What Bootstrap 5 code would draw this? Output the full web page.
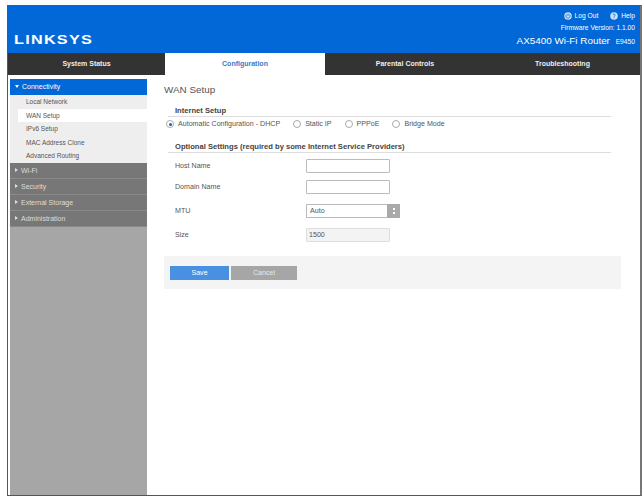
<!DOCTYPE html>
<html lang="en">
<head>
<meta charset="UTF-8">
<title>Linksys WAN Setup</title>
<link href="https://cdn.jsdelivr.net/npm/bootstrap@5.3.3/dist/css/bootstrap.min.css" rel="stylesheet">
<style>
  html, body { height: 100%; overflow: hidden; }
  body { background: #fff; font-family: "Liberation Sans", Arial, sans-serif; font-size: 7px; color: #444; padding: 5px 0 0 7px; }
  .frame { width: 635px; height: 491px; border: 1px solid #555; border-right-width: 2px; border-right-color: #777; }
  .top-bar { height: 47px; background: #0268d8; color: #fff; padding: 0 0 0 6px; }
  .brand { font-size: 12.5px; font-weight: 700; letter-spacing: .95px; transform: scaleX(1.3); transform-origin: left center; line-height: 12px; margin-bottom: 7px; }
  .top-right { padding: 4px 5px 0 0; line-height: 11px; font-size: 6.7px; }
  .top-right svg { width: 8px; height: 8px; vertical-align: -2px; margin-right: 3px; }
  .top-right svg.help-icon { margin-left: 10px; }
  .fw-line { margin-top: 1px; }
  .router-name { font-size: 9.9px; line-height: 13px; margin-top: 1px; }
  .router-name span { font-size: 6.7px; margin-left: 3px; }
  .tab-bar { height: 22px; background: #333; }
  .tab-item { color: #eee; font-size: 7px; font-weight: 700; line-height: 21px; text-align: center; width: 160px; flex: none; }
  .tab-item.first { width: 157px; }
  .tab-item.last { width: auto; flex: 1; }
  .tab-item.open { background: #fff; color: #3a79c4; height: 23px; }
  .page-body { height: 420px; }
  .side-col { width: 137px; margin: 4px 0 0 2px; background: #a6a6a6; flex: none; }
  .group-open { height: 16px; background: #0268d8; color: #fff; line-height: 16px; padding-left: 5px; font-size: 7px; }
  .sub-list { background: #eee; padding-top: 0; height: 68px; }
  .sub-link { height: 13.6px; line-height: 13.6px; padding-left: 16px; font-size: 6.5px; color: #555; }
  .sub-link.now { background: #fff; margin-left: 8px; padding-left: 8px; }
  .group-shut { height: 16px; background: #777; color: #ddd; line-height: 15px; padding-left: 5px; border-bottom: 1px solid #8a8a8a; font-size: 7px; }
  .arrow-d, .arrow-r { display: inline-block; width: 0; height: 0; margin-right: 3px; vertical-align: 1px; }
  .arrow-d { border-left: 2.5px solid transparent; border-right: 2.5px solid transparent; border-top: 3px solid #fff; }
  .arrow-r { border-top: 2.5px solid transparent; border-bottom: 2.5px solid transparent; border-left: 3px solid #ddd; }
  .main-col { padding: 8px 19px 0 17px; flex: 1; }
  .page-title { font-size: 9.9px; line-height: 14px; font-weight: 400; color: #555; margin: 0 0 8px; }
  .sect-head { font-size: 7.6px; font-weight: 700; color: #444; line-height: 11px; border-bottom: 1px solid #ddd; margin: 0 10px 0 4px; padding-left: 7px; }
  .radio-row { height: 12px; margin: 1px 0 11px 2px; line-height: 12px; font-size: 7.1px; color: #555; }
  .radio-dot { width: 8px; height: 8px; border: 1px solid #aaa; border-radius: 50%; background: #fff; flex: none; margin-right: 4px; display: flex; align-items: center; justify-content: center; }
  .radio-dot i { width: 3px; height: 3px; border-radius: 50%; background: #0268d8; display: block; }
  .radio-opt { margin-right: 13px; }
  .form-line { margin-left: 11px; height: 14px; line-height: 14px; font-size: 7.1px; color: #555; }
  .form-line label { width: 131px; flex: none; }
  .text-box { width: 84px; height: 14px; border: 1px solid #bbb; border-radius: 1px; background: #fff; padding: 0 3px; font-size: 7.1px; color: #555; line-height: 12px; }
  .text-box.off { background: #f3f3f3; border-color: #ddd; padding-left: 2px; }
  .pick-wrap { width: 94px; height: 14px; }
  .pick-wrap .text-box { width: 81px; border-right: 0; border-radius: 1px 0 0 1px; }
  .pick-btn { width: 13px; background: #aaa; flex: none; flex-direction: column; gap: 2px; }
  .pick-btn i { width: 2px; height: 2px; background: #fff; display: block; }
  .foot-panel { height: 33px; background: #f4f4f4; margin-top: 14px; padding: 10px 0 0 6px; }
  .foot-btn { height: 14px; font-size: 7.1px; line-height: 14px; text-align: center; color: #fff; border: 0; padding: 0; border-radius: 0; }
  .foot-btn.go { width: 59px; background: #4a90e2; }
  .foot-btn.stop { width: 66px; background: #a6a6a6; margin-left: 2px; color: #e8e8e8; }
  .gap-host { margin-top: 6px; }
  .gap-dom { margin-top: 7px; }
  .gap-mtu { margin-top: 10px; }
</style>
</head>
<body>
<div class="frame">
  <header class="top-bar d-flex justify-content-between align-items-end">
    <div class="brand">LINKSYS</div>
    <div class="top-right text-end align-self-start">
      <div>
        <svg viewBox="0 0 16 16"><circle cx="8" cy="8" r="7.5" fill="#cfe2f8"/><path d="M5.2 4.8a4.3 4.3 0 1 0 5.6 0" fill="none" stroke="#0268d8" stroke-width="1.6"/><path d="M8 3v5" stroke="#0268d8" stroke-width="1.6"/></svg>Log Out
        <svg class="help-icon" viewBox="0 0 16 16"><circle cx="8" cy="8" r="7.5" fill="#cfe2f8"/><path d="M5.6 6.2a2.4 2.2 0 1 1 3.6 2c-.9.5-1.2 1-1.2 1.8" fill="none" stroke="#0268d8" stroke-width="1.7"/><rect x="7.1" y="11" width="1.8" height="1.8" fill="#0268d8"/></svg>Help
      </div>
      <div class="fw-line">Firmware Version: 1.1.00</div>
      <div class="router-name">AX5400 Wi-Fi Router <span>E9450</span></div>
    </div>
  </header>
  <nav class="tab-bar d-flex">
    <div class="tab-item first">System Status</div>
    <div class="tab-item open">Configuration</div>
    <div class="tab-item">Parental Controls</div>
    <div class="tab-item last">Troubleshooting</div>
  </nav>
  <div class="page-body d-flex">
    <aside class="side-col">
      <div class="group-open"><span class="arrow-d"></span>Connectivity</div>
      <div class="sub-list">
        <div class="sub-link">Local Network</div>
        <div class="sub-link now">WAN Setup</div>
        <div class="sub-link">IPv6 Setup</div>
        <div class="sub-link">MAC Address Clone</div>
        <div class="sub-link">Advanced Routing</div>
      </div>
      <div class="group-shut"><span class="arrow-r"></span>Wi-Fi</div>
      <div class="group-shut"><span class="arrow-r"></span>Security</div>
      <div class="group-shut"><span class="arrow-r"></span>External Storage</div>
      <div class="group-shut"><span class="arrow-r"></span>Administration</div>
    </aside>
    <main class="main-col">
      <h1 class="page-title">WAN Setup</h1>
      <div class="sect-head">Internet Setup</div>
      <div class="radio-row d-flex align-items-center">
        <span class="radio-dot"><i></i></span><span class="radio-opt">Automatic Configuration - DHCP</span>
        <span class="radio-dot"></span><span class="radio-opt">Static IP</span>
        <span class="radio-dot"></span><span class="radio-opt">PPPoE</span>
        <span class="radio-dot"></span><span class="radio-opt">Bridge Mode</span>
      </div>
      <div class="sect-head">Optional Settings (required by some Internet Service Providers)</div>
      <div class="form-line d-flex gap-host"><label>Host Name</label><div class="text-box"></div></div>
      <div class="form-line d-flex gap-dom"><label>Domain Name</label><div class="text-box"></div></div>
      <div class="form-line d-flex gap-mtu"><label>MTU</label>
        <div class="pick-wrap d-flex"><div class="text-box">Auto</div><div class="pick-btn d-flex align-items-center justify-content-center"><i></i><i></i></div></div>
      </div>
      <div class="form-line d-flex gap-mtu"><label>Size</label><div class="text-box off">1500</div></div>
      <div class="foot-panel d-flex">
        <button class="btn foot-btn go">Save</button>
        <button class="btn foot-btn stop">Cancel</button>
      </div>
    </main>
  </div>
</div>
<script src="https://cdn.jsdelivr.net/npm/bootstrap@5.3.3/dist/js/bootstrap.bundle.min.js"></script>
</body>
</html>
